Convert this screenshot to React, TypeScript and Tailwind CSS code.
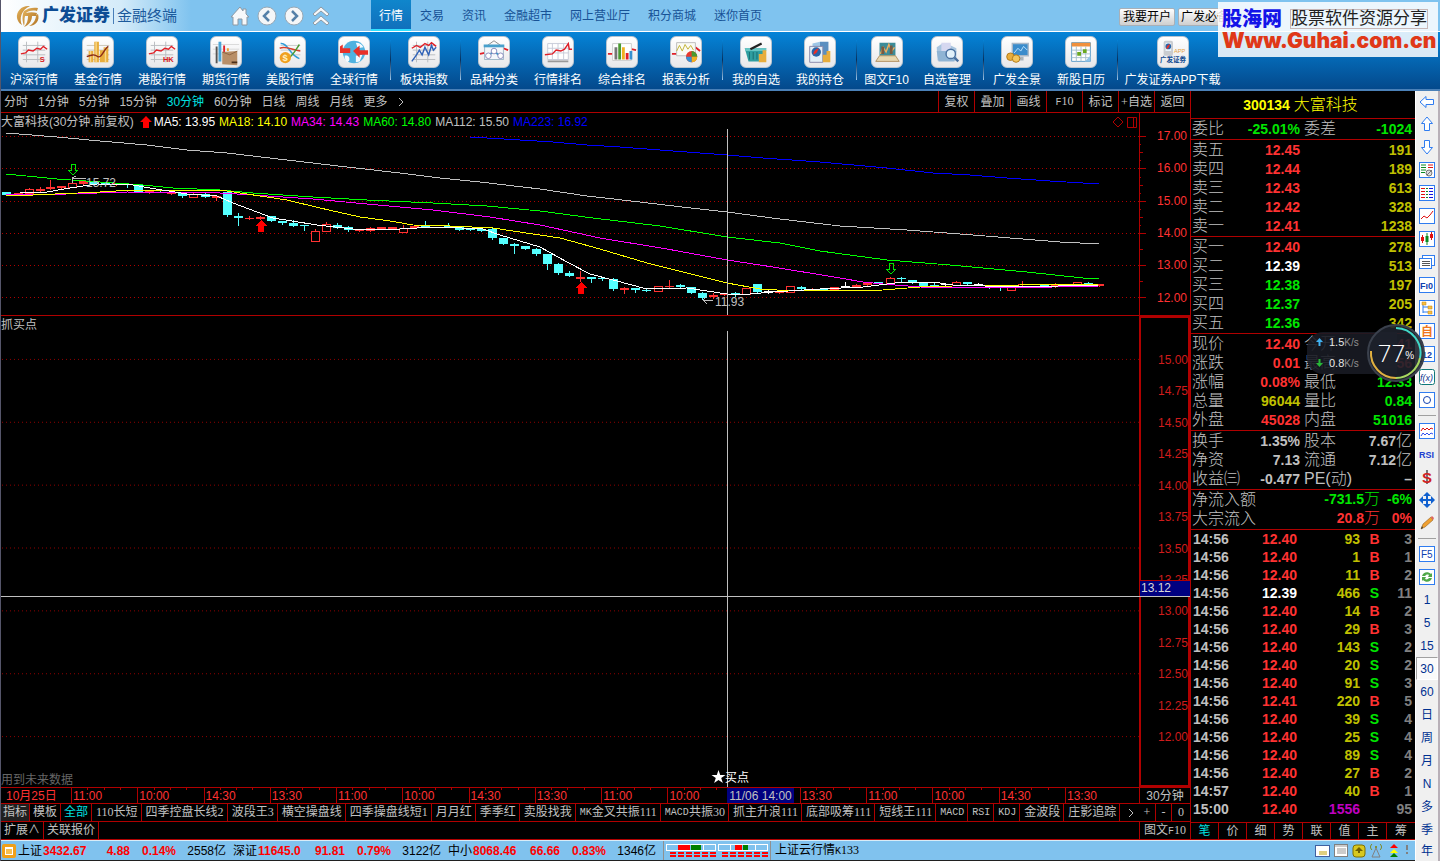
import React from 'react';

type Row = [string, string, string, string, string, string];

const mainNav = ['交易', '资讯', '金融超市', '网上营业厅', '积分商城', '迷你首页'];

const toolGroups = [
  [
    { icon: 'lineS', label: '沪深行情' },
    { icon: 'gold', label: '基金行情' },
    { icon: 'lineHK', label: '港股行情' },
    { icon: 'futures', label: '期货行情' },
    { icon: 'us', label: '美股行情' },
    { icon: 'globe', label: '全球行情' },
  ],
  [{ icon: 'index', label: '板块指数' }],
  [
    { icon: 'types', label: '品种分类' },
    { icon: 'rank', label: '行情排名' },
    { icon: 'bars', label: '综合排名' },
    { icon: 'pie', label: '报表分析' },
  ],
  [
    { icon: 'basket', label: '我的自选' },
    { icon: 'holding', label: '我的持仓' },
  ],
  [
    { icon: 'f10', label: '图文F10', width: 'w-[57px]' },
    { icon: 'manage', label: '自选管理' },
  ],
  [
    { icon: 'monitor', label: '广发全景' },
    { icon: 'calendar', label: '新股日历' },
  ],
  [{ icon: 'app', label: '广发证券APP下载', width: 'w-[107px]' }],
];

const periods = ['分时', '1分钟', '5分钟', '15分钟', '30分钟', '60分钟', '日线', '周线', '月线', '更多'];
const chartTools = ['复权', '叠加', '画线', 'F10', '标记', '+自选', '返回'];

const legend = [
  { text: 'MA5: 13.95', color: 'text-white' },
  { text: 'MA18: 14.10', color: 'text-[#ffff00]' },
  { text: 'MA34: 14.43', color: 'text-[#ff00ff]' },
  { text: 'MA60: 14.80', color: 'text-[#00ff00]' },
  { text: 'MA112: 15.50', color: 'text-[#c0c0c0]' },
  { text: 'MA223: 16.92', color: 'text-[#0000ff]' },
];

const priceAxis = ['17.00', '16.00', '15.00', '14.00', '13.00', '12.00'];
const signalAxis = ['15.00', '14.75', '14.50', '14.25', '14.00', '13.75', '13.50', '13.25', '13.00', '12.75', '12.50', '12.25', '12.00'];
const timeAxis = ['11:00', '10:00', '14:30', '13:30', '11:00', '10:00', '14:30', '13:30', '11:00', '10:00', '', '13:30', '11:00', '10:00', '14:30'];

const maLines = [
  { color: '#0000ff', points: '470,137 487,138 520,140 553,142 587,145 620,147 673,151 727,155 763,158 820,162 887,168 933,173 970,175 1007,178 1050,181 1099,184' },
  { color: '#c0c0c0', points: '6,133 57,137 100,141 147,145 187,150 227,153 287,160 347,167 400,173 440,178 480,182 540,189 587,196 640,202 682,207 727,212 780,219 840,226 907,230 973,235 1060,242 1099,244' },
  { color: '#00ff00', points: '6,174 57,179 143,185 173,188 220,190 253,193 313,197 367,200 433,203 487,206 540,211 593,218 660,226 727,237 780,243 820,251 887,260 950,265 1027,272 1083,278 1099,279' },
  { color: '#ff00ff', points: '6,195 67,194 127,192 220,193 253,195 313,199 367,204 433,210 490,217 540,225 600,238 667,249 727,260 773,267 840,278 863,282 883,284 920,287 993,288 1053,287 1099,286' },
  { color: '#ffff00', points: '6,195 33,195 100,192 133,190 218,190 227,191 260,196 287,200 320,208 360,217 390,221 413,225 450,226 493,228 533,234 560,238 600,249 647,263 707,278 727,283 760,289 793,291 883,290 920,287 953,286 1020,285 1099,284' },
  { color: '#ffffff', points: '20,193 47,192 70,188 97,184 133,185 150,188 187,194 217,196 233,203 273,218 317,225 353,229 400,229 417,228 440,227 483,229 500,235 540,247 567,262 590,274 613,280 647,289 687,288 707,291 727,294 750,294 773,292 820,289 863,287 903,282 933,282 953,285 1017,287 1099,285' },
];

// x, body top, body bottom, high, low, kind (c = down, r = up filled, h = up hollow, w = flat)
const candles: [number, number, number, number, number, string][] = [
  [6, 192, 195, 192, 195, 'c'], [18, 193, 194, 193, 194, 'r'], [29, 189, 193, 188, 193, 'h'], [40, 189, 191, 187, 191, 'r'],
  [50, 187, 189, 180, 189, 'r'], [61, 186, 188, 186, 188, 'r'], [72, 183, 187, 181, 187, 'h'], [83, 181, 184, 181, 184, 'r'],
  [94, 182, 184, 182, 184, 'c'], [105, 183, 185, 183, 185, 'c'], [116, 183, 185, 183, 185, 'r'], [127, 184, 185, 184, 187, 'c'],
  [138, 185, 192, 185, 192, 'c'], [149, 191, 193, 191, 193, 'r'], [160, 190, 191, 189, 192, 'c'], [171, 193, 194, 193, 194, 'r'],
  [182, 193, 196, 193, 197, 'c'], [193, 194, 197, 193, 197, 'h'], [205, 194, 197, 193, 197, 'c'], [216, 196, 198, 196, 200, 'r'],
  [227, 192, 215, 191, 216, 'c'], [238, 216, 218, 213, 225, 'c'], [249, 218, 219, 216, 219, 'r'], [260, 217, 219, 216, 219, 'r'],
  [271, 216, 221, 216, 221, 'c'], [282, 221, 223, 221, 224, 'c'], [293, 223, 226, 220, 226, 'c'], [304, 225, 226, 225, 230, 'c'],
  [315, 231, 241, 229, 241, 'h'], [326, 224, 231, 222, 231, 'h'], [337, 225, 228, 223, 228, 'c'], [348, 227, 230, 226, 231, 'c'],
  [359, 230, 231, 230, 231, 'r'], [370, 228, 231, 227, 231, 'r'], [381, 227, 229, 227, 229, 'r'], [392, 227, 229, 227, 229, 'r'],
  [403, 228, 232, 225, 232, 'h'], [414, 226, 228, 225, 228, 'r'], [425, 226, 227, 221, 227, 'c'], [448, 226, 227, 223, 227, 'c'],
  [459, 227, 230, 226, 230, 'c'], [470, 228, 230, 228, 230, 'c'], [481, 229, 231, 229, 231, 'c'], [492, 229, 238, 228, 239, 'c'],
  [503, 238, 244, 238, 244, 'c'], [514, 244, 246, 243, 253, 'c'], [525, 246, 249, 246, 249, 'c'], [536, 249, 254, 248, 255, 'c'],
  [547, 254, 264, 254, 269, 'c'], [558, 264, 273, 263, 274, 'c'], [569, 273, 276, 271, 276, 'c'], [580, 277, 279, 271, 281, 'r'],
  [591, 277, 279, 277, 282, 'c'], [602, 278, 279, 278, 280, 'c'], [613, 279, 289, 278, 290, 'c'], [624, 288, 290, 287, 293, 'r'],
  [635, 288, 290, 288, 292, 'c'], [646, 290, 291, 289, 291, 'c'], [658, 286, 291, 286, 291, 'h'], [669, 286, 287, 280, 287, 'r'],
  [680, 285, 287, 284, 287, 'c'], [691, 287, 293, 287, 293, 'c'], [702, 293, 298, 292, 299, 'c'], [713, 295, 297, 293, 298, 'r'],
  [724, 294, 295, 293, 295, 'r'], [735, 293, 294, 292, 296, 'c'], [746, 288, 294, 288, 294, 'h'], [757, 284, 292, 284, 292, 'c'],
  [768, 291, 292, 290, 293, 'w'], [779, 292, 293, 292, 293, 'r'], [790, 286, 292, 286, 292, 'h'], [801, 287, 289, 286, 289, 'c'],
  [812, 289, 290, 288, 290, 'r'], [823, 289, 290, 288, 290, 'c'], [834, 287, 290, 287, 290, 'r'], [845, 286, 287, 282, 287, 'w'],
  [856, 285, 287, 284, 287, 'r'], [867, 283, 285, 282, 285, 'r'], [878, 282, 283, 282, 283, 'c'], [890, 278, 284, 277, 284, 'h'],
  [901, 278, 279, 277, 281, 'c'], [912, 280, 283, 280, 283, 'c'], [923, 283, 286, 283, 286, 'c'], [934, 285, 286, 283, 286, 'c'],
  [945, 284, 285, 283, 286, 'w'], [956, 282, 285, 281, 285, 'h'], [967, 282, 284, 282, 284, 'c'], [978, 284, 285, 283, 285, 'w'],
  [989, 286, 287, 286, 288, 'c'], [1000, 287, 288, 287, 290, 'c'], [1011, 287, 290, 287, 290, 'h'], [1022, 284, 285, 281, 285, 'r'],
  [1044, 285, 287, 285, 287, 'c'], [1055, 285, 287, 283, 287, 'r'], [1077, 282, 284, 282, 284, 'h'], [1088, 283, 284, 282, 284, 'c'],
  [1099, 284, 286, 284, 286, 'r'],
];

const indicators = [
  '110长短', '四季控盘长线2', '波段王3', '横空操盘线', '四季操盘线短1', '月月红', '季季红', '卖股找我', 'MK金叉共振111',
  'MACD共振30', '抓主升浪111', '底部吸筹111', '短线王111', 'MACD', 'RSI', 'KDJ', '金波段', '庄影追踪',
];

const R = 'text-[#ff3232]';
const G = 'text-[#00e600]';
const Y = 'text-[#c0c000]';
const W = 'text-white';
const S = 'text-[#c0c0c0]';

const quoteSections: Row[][] = [
  [['委比', '-25.01%', G, '委差', '-1024', G]],
  [
    ['卖五', '12.45', R, '', '191', Y],
    ['卖四', '12.44', R, '', '189', Y],
    ['卖三', '12.43', R, '', '613', Y],
    ['卖二', '12.42', R, '', '328', Y],
    ['卖一', '12.41', R, '', '1238', Y],
  ],
  [
    ['买一', '12.40', R, '', '278', Y],
    ['买二', '12.39', W, '', '513', Y],
    ['买三', '12.38', G, '', '197', Y],
    ['买四', '12.37', G, '', '205', Y],
    ['买五', '12.36', G, '', '342', Y],
  ],
  [
    ['现价', '12.40', R, '今开', '12.41', R],
    ['涨跌', '0.01', R, '最高', '12.56', R],
    ['涨幅', '0.08%', R, '最低', '12.33', G],
    ['总量', '96044', Y, '量比', '0.84', G],
    ['外盘', '45028', R, '内盘', '51016', G],
  ],
  [
    ['换手', '1.35%', S, '股本', '7.67亿', S],
    ['净资', '7.13', S, '流通', '7.12亿', S],
    ['收益㈢', '-0.477', S, 'PE(动)', '–', S],
  ],
];

const ticks = [
  ['14:56', '12.40', '93', 'B', '3'],
  ['14:56', '12.40', '1', 'B', '1'],
  ['14:56', '12.40', '11', 'B', '2'],
  ['14:56', '12.39', '466', 'S', '11'],
  ['14:56', '12.40', '14', 'B', '2'],
  ['14:56', '12.40', '29', 'B', '3'],
  ['14:56', '12.40', '143', 'S', '2'],
  ['14:56', '12.40', '20', 'S', '2'],
  ['14:56', '12.40', '91', 'S', '3'],
  ['14:56', '12.41', '220', 'B', '5'],
  ['14:56', '12.40', '39', 'S', '4'],
  ['14:56', '12.40', '25', 'S', '4'],
  ['14:56', '12.40', '89', 'S', '4'],
  ['14:56', '12.40', '27', 'B', '2'],
  ['14:57', '12.40', '40', 'B', '1'],
  ['15:00', '12.40', '1556', '', '95'],
];

const sideIcons = [
  ['left', 'up', 'down', 'report', 'list', 'trend', 'kline', 'pages', 'fio', 'tree', 'zi', 'n12', 'fx', 'ring'],
  ['waves', 'rsi', 'dollar', 'move', 'pencil'],
  ['f5', 'refresh'],
];
const sidePeriods = ['1', '5', '15', '30', '60', '日', '周', '月', 'N', '多', '季', '年'];

const markets = [
  { name: '上证', price: '3432.67', change: '4.88', pct: '0.14%', amount: '2558亿' },
  { name: '深证', price: '11645.0', change: '91.81', pct: '0.79%', amount: '3122亿' },
  { name: '中小', price: '8068.46', change: '66.66', pct: '0.83%', amount: '1346亿' },
];

// Capitals are set in a narrow mono face, the rest keeps the song-like digits
const Mixed = ({ text }: { text: string }) => (
  <>
    {text.split(/([A-Z]+)/).map((part, i) =>
      /[A-Z]/.test(part) ? (
        <span key={i} className="font-[family-name:'Liberation_Mono',monospace] text-[10px]">{part}</span>
      ) : (
        part
      )
    )}
  </>
);

const Amount = ({ text }: { text: string }) => (
  <>
    {text.split(/([亿万])/).map((part, i) =>
      /[亿万]/.test(part) ? <span key={i} className="text-base/[18px] font-light">{part}</span> : part
    )}
  </>
);

const Chevron = () => (
  <svg viewBox="0 0 6 10" className="h-[10px] w-[6px]" fill="none" stroke="currentColor" aria-hidden="true"><path d="M1 1l4 4-4 4" /></svg>
);

const Grid = () => <path d="M4 9h24M4 14h24M4 19h24M4 24h24M8 5v22M20 5v22" stroke="#b9bcc0" strokeWidth="1" fill="none" />;
const RedLine = () => <path d="M2 18l5-1 3-3 5 1 4-3 4 1 3-3 4 3" stroke="#e02028" strokeWidth="1.5" fill="none" />;

const toolArt: Record<string, React.ReactNode> = {
  lineS: <><Grid /><RedLine /><text x="22" y="27" fontSize="8" fontWeight="bold" fill="#d81820">S</text></>,
  lineHK: <><Grid /><RedLine /><text x="17" y="27" fontSize="8" fontWeight="bold" fill="#d81820">HK</text></>,
  gold: (
    <>
      <path d="M4 9h24M4 14h24M4 19h24M4 24h24" stroke="#c9c2b4" />
      <path d="M6 15h5v12H6zM12 5h5v22h-5zM18 14h4v13h-4zM22 11h5v16h-5z" fill="#e8ad3c" />
      <path d="M8 15v12M14 5v22M24 11v16" stroke="#f8d98a" strokeWidth="1.5" />
      <path d="M4 21c5-2 8-3 12 0 4 2 6-8 11-11" stroke="#8c2c18" strokeWidth="1.5" fill="none" />
    </>
  ),
  futures: (
    <>
      <path d="M2 8h28M2 13h28M2 18h12" stroke="#d9d9d9" />
      <path d="M5 10h2v18H5z" fill="#555" /><path d="M8 5h3v21H8z" fill="#4aa5d8" />
      <path d="M13 9h2v7h-2z" fill="#e02028" /><path d="M17 12h2v3h-2z" fill="#f0a030" />
      <path d="M12 16l16-1v15l-16-1z" fill="#b98f68" /><path d="M12 16l8 3 8-4" stroke="#8c6340" fill="none" /><path d="M22 27h6" stroke="#4b2f18" strokeWidth="2" />
    </>
  ),
  us: (
    <>
      <path d="M6 9h21M6 14h21M6 19h21" stroke="#c8c8c8" />
      <path d="M6 7c8-1 9 12 20 16" stroke="#2f9cd8" strokeWidth="1.5" fill="none" />
      <path d="M5 12c7-3 13 2 22 3" stroke="#d8402c" strokeWidth="1.5" fill="none" />
      <path d="M14 23c5-3 8-9 12-15" stroke="#4a9a30" strokeWidth="1.5" fill="none" />
      <circle cx="11" cy="22" r="6" fill="#f0a020" /><text x="8" y="26" fontSize="10" fontWeight="bold" fill="#fff2c0">$</text>
    </>
  ),
  globe: (
    <>
      <circle cx="16" cy="16" r="12" fill="#4fb2e0" />
      <path d="M6 20c3-1 6 1 5 5l-2 2c-2-2-3-4-3-7zM18 6c4 0 7 2 8 5l-6 1zM18 20l7-1-3 7-4 1z" fill="#f4faff" />
      <path d="M1 10l3-2v4h8v5H1zM31 21v-7h-9V9l-7 6 7 7v-3h9z" fill="#e83028" />
    </>
  ),
  index: (
    <>
      <Grid />
      <path d="M3 12l5-3 4 2 5-4 4 2 3-3 5 4" stroke="#e02028" strokeWidth="1.5" fill="none" />
      <path d="M3 26l5-7 3-5 3 5 3-8 4 8 3-10 2 5 3-3" stroke="#2f62b8" strokeWidth="1.5" fill="none" />
    </>
  ),
  types: (
    <>
      <path d="M1 18l5-1M26 12l5 2" stroke="#e02028" strokeWidth="2" />
      <path d="M16 4L9 9M16 4l7 5" stroke="#888" /><rect x="6" y="9" width="20" height="15" fill="#f4f8fb" stroke="#9db6c6" /><rect x="5" y="8" width="22" height="3" fill="#48a0cc" />
      <path d="M10 20l6-5 6 5" stroke="#4098c8" strokeWidth="2" fill="none" /><circle cx="10" cy="20" r="3" fill="#fff" stroke="#88b" /><circle cx="16" cy="15" r="3" fill="#fff" stroke="#88b" /><circle cx="23" cy="20" r="3" fill="#fff" stroke="#88b" />
    </>
  ),
  rank: (
    <>
      <path d="M5 7h22v17H5zM5 12h22M5 17h22M10 7v17M16 7v17M22 7v17" stroke="#c6cbd8" fill="#fff" /><path d="M5 26h22" stroke="#999" strokeWidth="2" />
      <path d="M2 19l8-1 4-4 5 1 4-2 4-6 1 6h3" stroke="#e02028" strokeWidth="1.5" fill="none" />
    </>
  ),
  bars: (
    <>
      <path d="M1 18h5M26 13l5 1" stroke="#e02028" strokeWidth="2" /><path d="M6 7h20v18H6z" fill="#fff" stroke="#ccc" />
      <path d="M8 11h3v13H8z" fill="#777" /><path d="M12 7h3v17h-3z" fill="#4a9a30" /><path d="M16 11h3v13h-3z" fill="#f0b020" /><path d="M20 17h3v7h-3z" fill="#e02028" /><path d="M24 15h3v9h-3z" fill="#3890d0" />
    </>
  ),
  pie: (
    <>
      <path d="M1 18h5M26 11l5 4" stroke="#e02028" strokeWidth="2" /><path d="M6 6h20v14H6z" fill="#fbfbf4" stroke="#bbb" />
      <path d="M6 15l3-6 3 6 3-7 3 5 3-4 3 5" stroke="#c0b030" fill="none" />
      <circle cx="22" cy="21" r="6" fill="#e8382c" /><path d="M22 21V15a6 6 0 0 1 6 6z" fill="#4a9a30" /><path d="M22 21h6a6 6 0 0 1-6 6z" fill="#f0b020" /><path d="M22 21v6a6 6 0 0 1-6-6z" fill="#3890d0" />
    </>
  ),
  basket: (
    <>
      <path d="M4 12h23l-3 14H8z" fill="#2f9ea0" /><path d="M4 12h23v3H5z" fill="#68c6c4" /><path d="M9 16v8M13 16v8M17 16v8" stroke="#176c70" />
      <path d="M10 13l12-6" stroke="#222" strokeWidth="2.5" /><path d="M19 18h4v9h-4zM23 14h4v13h-4z" fill="#e8ad3c" />
    </>
  ),
  holding: (
    <>
      <path d="M8 7l8-2v20l-8 2z" fill="#9ec6e6" /><path d="M16 5h9v20h-9z" fill="#5a8fc0" /><path d="M5 10h14v17H5z" fill="#e4f0f8" stroke="#88a" />
      <circle cx="12" cy="16" r="5" fill="#2864a8" /><path d="M9 19c0-5 3-6 6-7-2 2-1 5-6 7z" fill="#e83028" /><path d="M19 19h4v8h-4zM23 15h4v12h-4z" fill="#e8ad3c" />
    </>
  ),
  f10: (
    <>
      <path d="M8 6h17v14H8z" fill="#3c8c98" /><path d="M9 18l3-7 3 5 3-8 3 7 3-4" stroke="#f0b060" strokeWidth="1.5" fill="none" /><path d="M10 10h3v8h-3zM19 9h3v9h-3z" fill="#7a5a40" />
      <path d="M8 20h17l4 6H4z" fill="#e8d8b0" stroke="#b09060" />
    </>
  ),
  manage: (
    <>
      <path d="M5 11l6-4 9 2 6 3v13H6z" fill="#a8c4de" /><path d="M10 6h10v10H10z" fill="#d6d8f0" /><path d="M5 15h21l-2 11H7z" fill="#8fb4d4" />
      <circle cx="20" cy="18" r="5" fill="#e0f0fa" stroke="#4870a0" strokeWidth="1.5" /><path d="M24 22l4 4" stroke="#4870a0" strokeWidth="2.5" />
    </>
  ),
  monitor: (
    <>
      <path d="M11 7h17v13H11z" fill="#3a8ccc" stroke="#a8b8c8" strokeWidth="1.5" /><path d="M13 17l4-5 3 3 3-5 4 4" stroke="#bfe4ff" fill="none" /><path d="M17 21h6v4h-6z" fill="#aab4bc" />
      <circle cx="9" cy="21" r="4" fill="#e8ad3c" stroke="#b07818" /><circle cx="15" cy="23" r="4" fill="#f4c65c" stroke="#b07818" />
    </>
  ),
  calendar: (
    <>
      <path d="M6 6h20v20H6z" fill="#fff" stroke="#5a9ac8" /><path d="M6 6h20v4H6z" fill="#f0903c" /><path d="M6 14h20M6 18h20M6 22h20M11 10v16M16 10v16M21 10v16" stroke="#a8c0cc" />
      <path d="M12 16h4v4h-4zM18 13h4v4h-4z" fill="#6aa820" /><path d="M20 26l6-6v6z" fill="#90c4e8" />
    </>
  ),
  app: (
    <>
      <rect x="6" y="4" width="10" height="16" rx="2" fill="#c9ccd0" /><path d="M8 6h6v9H8z" fill="#e8f2fa" /><circle cx="11" cy="10" r="3" fill="#2864a8" /><path d="M9 13c0-4 2-4 4-6-1 3-1 5-4 6z" fill="#e83028" />
      <text x="17" y="17" fontSize="6" fill="#e0a040">APP</text><text x="2" y="27" fontSize="7" fontWeight="bold" fill="#104a90">广发证券</text>
    </>
  ),
};

const Frame = ({ children }: { children?: React.ReactNode }) => (
  <><rect x="0.5" y="0.5" width="15" height="15" fill="#fff" stroke="#2f7cf0" />{children}</>
);

const sideArt: Record<string, React.ReactNode> = {
  left: <path d="M1 8l6-5.500V5.500h7.500v5H7v3z" fill="#fff" stroke="#2f7cf0" />,
  up: <path d="M8 1l5.500 6.500h-3v7h-5v-7h-3z" fill="#fff" stroke="#2f7cf0" />,
  down: <path d="M8 15l5.500-6.500h-3v-7h-5v7h-3z" fill="#fff" stroke="#2f7cf0" />,
  report: <Frame><path d="M2 3h5M2 5.500h5M2 8h5M2 10.500h4" stroke="#0a8a20" /><path d="M9 3h5M9 5.500h5" stroke="#e01010" /><circle cx="10" cy="11" r="3" fill="#ddd" stroke="#777" /><path d="M8 13l5-5" stroke="#777" /></Frame>,
  list: <Frame><path d="M2 3.500h4M2 6.500h4M2 9.500h4M2 12.500h4" stroke="#e01010" /><path d="M7 3.500h2M7 6.500h2M7 9.500h2M7 12.500h2" stroke="#0a8a20" /><path d="M10 3.500h4M10 6.500h4M10 9.500h4M10 12.500h4" stroke="#1010e0" /></Frame>,
  trend: <Frame><path d="M2 11l3-3 3 2 3-3 3-4" stroke="#e01010" fill="none" /></Frame>,
  kline: <Frame><path d="M3.500 4v8M12.500 1v8" stroke="#e01010" /><path d="M2 6h3v4H2zM11 3h3v4h-3z" fill="#e01010" /><path d="M8 2v12" stroke="#0a8a20" /><path d="M6.500 5h3v6h-3z" fill="#0a8a20" /></Frame>,
  pages: <><rect x="3.500" y="1.500" width="12" height="10" fill="#fff" stroke="#2f7cf0" /><rect x="0.500" y="4.500" width="12" height="10" fill="#fff" stroke="#2f7cf0" /><path d="M3 7.500h8M3 9.500h8M3 11.500h8" stroke="#555" /></>,
  fio: <Frame><text x="1" y="12" fontSize="9" fontWeight="bold" fill="#1040b0">Fı0</text></Frame>,
  tree: <Frame><path d="M4 3v10M4 7h5M4 12h5" stroke="#2f7cf0" /><path d="M3 2h4v3H3zM9 6h4v3H9zM9 11h4v3H9z" fill="#f8c040" stroke="#c08010" strokeWidth="0.500" /></Frame>,
  zi: <Frame><text x="2" y="13" fontSize="12" fontWeight="bold" fill="#f07820">自</text></Frame>,
  n12: <Frame><text x="3" y="12" fontSize="9" fontWeight="bold" fill="#1040b0">12</text></Frame>,
  fx: <><rect x="0.500" y="0.500" width="15" height="15" rx="2" fill="#fff" stroke="#107878" /><text x="1" y="12" fontSize="9" fontStyle="italic" fill="#103890">f(x)</text></>,
  ring: <Frame><circle cx="8" cy="8" r="3.500" fill="none" stroke="#1040b0" /></Frame>,
  waves: <Frame><path d="M2 8l2-3 2 2 2-2 2 2 2-2 2 1" stroke="#e01010" fill="none" /><path d="M2 13l2-3 2 2 2-2 2 2 2-2 2 1" stroke="#2f50f0" fill="none" /></Frame>,
  rsi: <text x="0" y="12" fontSize="9" fontWeight="bold" fill="#2040d0">RSI</text>,
  dollar: <><path d="M8 1v14" stroke="#777" strokeWidth="2" /><text x="3" y="14" fontSize="15" fontWeight="bold" fill="#d02020">S</text></>,
  move: <path d="M8 0l4 4H9v3h3V4l4 4-4 4V9H9v3h3l-4 4-4-4h3V9H4v3L0 8l4-4v3h3V4H4z" fill="#1060d0" />,
  pencil: <><path d="M2 14l2-5 8-7 2 3-8 7z" fill="#f0a030" stroke="#805010" strokeWidth="0.500" /><path d="M12 2l2 3 1-2-2-2z" fill="#e06060" /><path d="M2 14l1-3 1 2z" fill="#333" /></>,
  f5: <Frame><text x="2" y="12" fontSize="10" fill="#1040b0">F5</text></Frame>,
  refresh: <Frame><path d="M3 7c1-4 6-5 9-2l1-1v4H9l1-2c-2-1-3 0-4 1zM13 9c-1 4-6 5-9 2l-1 1V8h4l-1 2c2 1 3 0 4-1z" fill="#50a848" /></Frame>,
};

const Header = () => (
  <header className="relative">
    <div className="flex h-8 items-center border-b border-white bg-[linear-gradient(90deg,#fff_0,#d4ebf9_120px,#7fc3ef_190px)] text-xs">
      <div className="flex w-[229px] items-center pl-[15px]">
        <svg viewBox="0 0 24 24" className="size-6" aria-hidden="true">
          <defs>
            <linearGradient id="gold" x1="0" x2="1" y2="1">
              <stop offset="0" stopColor="#e8b860" /><stop offset="1" stopColor="#a8691c" />
            </linearGradient>
          </defs>
          <path d="M14 2C6 1 0 7 1 14c1 5 5 7 5 7-3-6-1-15 8-19z" fill="url(#gold)" />
          <path d="M8 7c4-3 9-4 14-3l-1 3c-5-1-9 0-11 2 4-1 7-1 11 0l-1 3h-4c0 5-3 9-8 11 3-3 4-7 4-11H9c-1 3 0 7-1 10-2-5-2-11 0-15z" fill="url(#gold)" />
          <path d="M22 10c2 6-2 12-9 12 4-2 7-6 7-11z" fill="url(#gold)" />
        </svg>
        <span className="ml-[2px] text-[17px]/[20px] font-black text-[#0c4c94]">广发证券</span>
        <span className="mx-[3px] h-4 w-px bg-[#4a7fb8]" />
        <span className="text-[15px]/[20px] text-[#1c5a9c]">金融终端</span>
      </div>
      <div className="flex w-[141px] items-center gap-[7px]">
        <button aria-label="首页"><svg viewBox="0 0 20 20" className="size-5"><path d="M10 1L1 11h2v8h5v-6h4v6h5v-8h2l-3-3V3h-3v2z" fill="#f6f8fa" stroke="#8d99a4" /></svg></button>
        <button aria-label="后退"><svg viewBox="0 0 20 20" className="size-5"><circle cx="10" cy="10" r="9" fill="#f4f6f8" stroke="#9aa8b4" /><path d="M12 5l-5 5 5 5" fill="none" stroke="#5580a8" strokeWidth="2.500" /></svg></button>
        <button aria-label="前进"><svg viewBox="0 0 20 20" className="size-5"><circle cx="10" cy="10" r="9" fill="#f4f6f8" stroke="#9aa8b4" /><path d="M8 5l5 5-5 5" fill="none" stroke="#5580a8" strokeWidth="2.500" /></svg></button>
        <button aria-label="收起"><svg viewBox="0 0 20 20" className="size-5"><path d="M10 1l8 7-2 2-6-5-6 5-2-2zM10 10l8 7-2 2-6-5-6 5-2-2z" fill="#f6f8fa" stroke="#8d99a4" /></svg></button>
      </div>
      <nav className="flex h-full items-center">
        <button className="h-full border-b-2 border-[#30e0ff] bg-linear-to-b from-[#0f86cc] to-[#1170bc] px-2 pt-[3px] text-white">行情</button>
        {mainNav.map((item) => (
          <button key={item} className="px-[9px] pt-px text-[#175296]">{item}</button>
        ))}
      </nav>
      <div className="mr-[208px] ml-auto flex gap-[3px] pt-[2px] text-black">
        <button className="rounded-xs border border-[#a8b0b8] bg-linear-to-b from-white to-[#cfcfcf] px-[3px] leading-4">我要开户</button>
        <button className="rounded-xs border border-[#a8b0b8] bg-linear-to-b from-white to-[#cfcfcf] px-[2px] leading-4">广发必备</button>
      </div>
    </div>

    <div className="flex h-[59px] border-b-2 border-[#4a80b8] bg-linear-to-b from-[#0584d8] to-[#04498c] pl-px">
      {toolGroups.map((group, g) => (
        <React.Fragment key={g}>
          {g > 0 && <span className="mt-2 mr-px ml-1 h-10 w-px bg-linear-to-b from-[#0584d8] via-[#06305c] to-[#9cc8ec]" />}
          {group.map((tool) => (
            <button key={tool.label} className={`flex flex-col items-center pt-1 text-xs text-white ${'width' in tool ? tool.width : 'w-16'}`}>
              <svg viewBox="0 0 32 32" className="size-8 shrink-0 rounded-md border border-[#b8c4d0] bg-linear-to-b from-white to-[#e8e8ea]" aria-hidden="true">
                {toolArt[tool.icon]}
              </svg>
              <span className="mt-1 leading-4 whitespace-nowrap">{tool.label}</span>
            </button>
          ))}
        </React.Fragment>
      ))}
    </div>

    <div className="absolute top-[2px] right-[2px] h-[55px] w-[220px] bg-white/85 px-1">
      <div className="flex items-center gap-2 pt-[2px]">
        <span className="text-xl/[30px] font-black text-[#1414e8]">股海网</span>
        <span className="border border-[#c8b8b8] text-[17px]/[18px] text-[#222]">股票软件资源分享</span>
      </div>
      <div className="font-[family-name:Inter,sans-serif] text-[21px]/[14px] font-black text-[#e03818]">Www.Guhai.com.cn</div>
    </div>
  </header>
);

const PeriodBar = () => (
  <div className="flex h-[22px] shrink-0 items-center border-b border-[#b00000] text-xs text-[#c0c0c0]">
    <div className="flex gap-[10px] pl-[3px]">
      {periods.map((p) => (
        <button key={p} className={p === '30分钟' ? 'text-[#00e0e0]' : ''}>{p}</button>
      ))}
      <button aria-label="展开" className="flex items-center"><Chevron /></button>
    </div>
    <div className="ml-auto flex h-full">
      {chartTools.map((t) => (
        <button key={t} className="w-9 border-l border-[#b00000] text-center font-[family-name:'Liberation_Serif','Noto_Sans_CJK_SC',serif]"><Mixed text={t} /></button>
      ))}
    </div>
  </div>
);

const PriceChart = () => (
  <section className="flex h-[203px] shrink-0 border-b border-[#b00000]">
    <div className="relative min-w-0 flex-1">
      <svg viewBox="1 113 1138 202" preserveAspectRatio="none" className="absolute inset-0 size-full" shapeRendering="crispEdges">
        {[136, 168, 201, 233, 265, 297].map((y) => (
          <path key={y} d={`M2 ${y}.5H1139`} stroke="#b00000" strokeDasharray="1 3" />
        ))}
        {candles.map(([x, top, bottom, high, low, kind]) => {
          const color = kind === 'c' ? '#54ffff' : kind === 'w' ? '#ffffff' : '#ff3232';
          return (
            <g key={x}>
              <path d={`M${x}.5 ${high}V${kind === 'h' ? top : low + 1}`} stroke={color} />
              {kind === 'h' ? (
                <rect x={x - 3.5} y={top + 0.5} width="8" height={bottom - top} fill="#000" stroke={color} />
              ) : (
                <rect x={x - 4} y={top} width="9" height={bottom - top} fill={color} />
              )}
            </g>
          );
        })}
        {maLines.map((line) => (
          <polyline key={line.color} points={line.points} fill="none" stroke={line.color} />
        ))}
        <path d="M71 164h4v6h3l-5 5-5-5h3zM889 263h4v6h3l-5 5-5-5h3z" fill="none" stroke="#00e600" />
        <path d="M261 220l6 6h-3v6h-6v-6h-3zM581 282l6 6h-3v6h-6v-6h-3z" fill="#ff0000" />
        <path d="M72 178h14M72 178l4-2M72 178v5M703 300h10M703 300l4-4M703 300l4 4" fill="none" stroke="#c0c0c0" />
        <text x="86" y="187" fontSize="12" fill="#c0c0c0">15.72</text>
        <text x="715" y="306" fontSize="12" fill="#c0c0c0">11.93</text>
        <path d="M727.5 129V315" stroke="#c0c0c0" />
      </svg>
      <div className="relative flex items-center pr-[1px] text-xs/[18px] text-[#c0c0c0]">
        <span>大富科技(30分钟.前复权)</span>
        <svg viewBox="0 0 12 12" className="mr-[2px] ml-[6px] size-3 text-[#ff0000]" aria-hidden="true"><path d="M6 0l6 6H9v6H3V6H0z" fill="currentColor" /></svg>
        <div className="flex gap-1">
          {legend.map((item) => (
            <span key={item.text} className={item.color}>{item.text}</span>
          ))}
        </div>
        <svg viewBox="0 0 26 12" className="ml-auto h-3 w-[26px]" fill="none" stroke="#b00000" aria-hidden="true">
          <path d="M6 1l5 5-5 5-5-5zM15.500 1.500h9v10h-9zM21.500 1.500v10" />
        </svg>
      </div>
    </div>
    <div className="relative flex w-[51px] flex-col border-l border-[#b00000] pt-[7px] pb-px text-right text-xs text-[#ff3232]">
      <svg viewBox="0 0 6 202" className="absolute top-0 left-0 h-[202px] w-[6px]" stroke="#b00000" aria-hidden="true">
        <path d="M0 23.500h6M0 55.500h6M0 88.500h6M0 120.500h6M0 152.500h6M0 184.500h6M0 39.500h3M0 72.500h3M0 104.500h3M0 136.500h3M0 168.500h3M0 31.500h1M0 47.500h1M0 64.500h1M0 80.500h1M0 96.500h1M0 112.500h1" />
      </svg>
      {priceAxis.map((p) => (
        <span key={p} className="flex flex-1 items-center justify-end pr-[3px]">{p}</span>
      ))}
    </div>
  </section>
);

const SignalChart = () => (
  <section className="relative flex min-h-0 flex-1 border-b border-[#b00000]">
    <div className="relative flex min-w-0 flex-1 flex-col justify-between text-xs text-[#c0c0c0]">
      <svg viewBox="1 316 1138 472" preserveAspectRatio="none" className="absolute inset-0 size-full" shapeRendering="crispEdges">
        {[359, 422, 485, 548, 611, 674, 737].map((y) => (
          <path key={y} d={`M2 ${y}.5H1139`} stroke="#900000" strokeDasharray="1 3" />
        ))}
        <path d="M727.5 331V788" stroke="#c0c0c0" />
        <path d="M718.5 771l1.700 5h5.300l-4.300 3 1.700 5-4.400-3-4.400 3 1.700-5-4.300-3h5.300z" fill="#fff" shapeRendering="auto" />
        <text x="725" y="783" fontSize="12" fill="#fff">买点</text>
      </svg>
      <span className="relative leading-[18px]">抓买点</span>
      <span className="relative leading-[14px] text-[#666]">用到未来数据</span>
    </div>
    <div className="flex w-[51px] flex-col border-2 border-[#b00000] pt-[26px] pb-[32px] text-right text-xs text-[#d01c1c]">
      {signalAxis.map((p) => (
        <span key={p} className="flex flex-1 items-center justify-end">{p}</span>
      ))}
    </div>
    {/* crosshair */}
    <div className="pointer-events-none absolute inset-x-0 top-[280px] h-px bg-[#c0c0c0]" />
    <div className="absolute top-[264px] right-0 w-[50px] border-t border-[#b00000] bg-[#000080] pl-px text-xs/[15px] text-[#d8d8d8]">13.12</div>
  </section>
);

const SubTicks = () => (
  <span className="absolute inset-x-0 top-0 grid h-[2px] grid-cols-4 divide-x divide-[#b00000]">
    <i /><i /><i /><i />
  </span>
);

const TimeAxis = () => (
  <div className="relative flex h-4 shrink-0 border-b border-[#b00000] text-xs/[17px] text-[#ff3232]">
    <span className="w-[70px] pl-[5px]">10月25日</span>
    {timeAxis.map((t, i) => (
      <span key={i} className="relative flex-1 border-l border-[#b00000] pl-px"><SubTicks />{t}</span>
    ))}
    <span className="w-[74px] border-l border-[#b00000] pl-px">13:30</span>
    <span className="w-[51px] border-l border-[#b00000] text-center text-[#c0c0c0]">30分钟</span>
    <span className="absolute left-[726px] h-[15px] w-[67px] bg-[#000080] text-center whitespace-nowrap text-[#c0c0c0]">11/06 14:00</span>
  </div>
);

const IndicatorTabs = () => (
  <div className="shrink-0 font-[family-name:'Liberation_Serif','Noto_Sans_CJK_SC',serif] text-xs/[17px] text-[#c0c0c0]">
    <div className="flex h-[18px] overflow-hidden border-b border-[#b00000] whitespace-nowrap">
      <button className="border-r border-[#b00000] bg-[#202020] px-[2px]">指标</button>
      <button className="border-r border-[#b00000] px-[3px]">模板</button>
      <button className="border-r border-[#b00000] px-[3px] text-[#00e0e0]">全部</button>
      {indicators.map((name, i) => (
        <button key={i} className="flex items-center border-r border-[#b00000] pr-[3px] pl-1"><Mixed text={name} /></button>
      ))}
      <button aria-label="更多指标" className="ml-auto flex w-4 items-center justify-center"><Chevron /></button>
      <button className="w-4">+</button>
      <button className="w-4 border-l border-[#b00000]">-</button>
      <button className="w-[19px] border-l border-[#b00000]">0</button>
    </div>
    <div className="flex h-[18px] border-b border-[#b00000]">
      <button className="border-r border-[#b00000] px-[3px]">扩展∧</button>
      <button className="border-r border-[#b00000] px-[3px]">关联报价</button>
      <button className="ml-auto w-[51px] border-l border-[#b00000]"><Mixed text="图文F10" /></button>
    </div>
  </div>
);

const NetWidget = () => (
  <div className="absolute top-[234px] -right-[10px] flex h-[55px] w-[118px] items-center font-normal">
    <div className="flex h-[42px] w-[90px] flex-col justify-center rounded-l-2xl bg-[#181b24]/90 pl-[9px] text-[11px]/[21px] text-[#e8e8e8]">
      <span className="flex items-center gap-[6px]"><svg viewBox="0 0 7 8" className="h-2 w-[7px]"><path d="M3.500 0L7 4H4.500v4h-2V4H0z" fill="#40b0f0" /></svg><span>1.5<span className="text-[10px] text-[#909090]">K/s</span></span></span>
      <span className="flex items-center gap-[6px]"><svg viewBox="0 0 7 8" className="h-2 w-[7px]"><path d="M3.500 8L7 4H4.500V0h-2v4H0z" fill="#28b838" /></svg><span>0.8<span className="text-[10px] text-[#909090]">K/s</span></span></span>
    </div>
    <div className="absolute right-0 flex size-[58px] items-center justify-center rounded-full border-2 border-[#3a404c] bg-[#1d212b]/90 text-white">
      <svg viewBox="0 0 54 54" className="absolute inset-0 size-full" fill="none" strokeWidth="2">
        <path d="M27 2a25 25 0 0 1 24 30" stroke="#40d8c8" /><path d="M51 32A25 25 0 0 1 27 52" stroke="#a8d860" /><path d="M27 52A25 25 0 0 1 2 25" stroke="#e0b040" />
      </svg>
      <span className="font-[family-name:'Open_Sans',sans-serif] text-2xl/[26px] font-light">77</span><span className="mt-2 text-[10px]">%</span>
    </div>
  </div>
);

const QuotePanel = () => (
  <aside className="relative flex w-[225px] shrink-0 flex-col border-l border-[#b00000] text-sm font-bold">
    <h1 className="h-7 border-b border-[#b00000] pr-[5px] text-center text-sm/[28px] font-bold text-[#ffff00]">
      300134 <span className="text-base/[26px] font-light">大富科技</span>
    </h1>
    {quoteSections.map((rows, s) => (
      <div key={s} className="border-b border-[#b00000] pb-px">
        <table className="w-full table-fixed border-collapse">
          <colgroup><col className="w-[52px]" /><col className="w-[57px]" /><col className="w-[50px]" /><col /></colgroup>
          <tbody>
            {rows.map(([label, value, color, label2, value2, color2]) => (
              <tr key={label} className="h-[19px]">
                <th scope="row" className="p-0 pl-px text-left text-base/[18px] font-light whitespace-nowrap text-[#c0c0c0]">{label}</th>
                <td className={`p-0 text-right leading-[18px] ${color}`}>{value}</td>
                <td className="p-0 pl-1 text-base/[18px] font-light whitespace-nowrap text-[#c0c0c0]">{label2}</td>
                <td className={`p-0 pr-[3px] text-right leading-[18px] ${color2}`}><Amount text={value2} /></td>
              </tr>
            ))}
          </tbody>
        </table>
      </div>
    ))}
    <div className="border-b border-[#b00000] pb-px leading-[19px]">
      <div className="flex pr-[3px] pl-px text-[#00e600]"><span className="text-base/[19px] font-light text-[#c0c0c0]">净流入额</span><span className="ml-auto"><Amount text="-731.5万" /></span><span className="w-8 text-right">-6%</span></div>
      <div className="flex pr-[3px] pl-px text-[#ff3232]"><span className="text-base/[19px] font-light text-[#c0c0c0]">大宗流入</span><span className="ml-auto"><Amount text="20.8万" /></span><span className="w-8 text-right">0%</span></div>
    </div>
    <table className="w-full table-fixed border-collapse leading-[18px]">
      <colgroup><col className="w-[46px]" /><col className="w-[60px]" /><col className="w-[63px]" /><col className="w-[29px]" /><col /></colgroup>
      <tbody>
        {ticks.map(([time, price, volume, side, count], i) => (
          <tr key={i} className="h-[18px]">
            <td className="p-0 pl-[2px] text-[#c0c0c0]">{time}</td>
            <td className={`p-0 text-right ${price === '12.39' ? 'text-white' : 'text-[#ff3232]'}`}>{price}</td>
            <td className={`p-0 text-right ${side ? 'text-[#c0c000]' : 'text-[#c000c0]'}`}>{volume}</td>
            <td className={`p-0 text-center ${side === 'B' ? 'text-[#ff3232]' : 'text-[#00e600]'}`}>{side}</td>
            <td className="p-0 pr-[3px] text-right text-[#808080]">{count}</td>
          </tr>
        ))}
      </tbody>
    </table>
    <div className="mt-auto grid h-[18px] grid-cols-8 divide-x divide-[#b00000] border-y border-[#b00000] text-xs/[16px] font-normal text-[#c0c0c0]">
      {['笔', '价', '细', '势', '联', '值', '主', '筹'].map((t, i) => (
        <button key={t} className={i === 0 ? 'text-[#00e0e0]' : ''}>{t}</button>
      ))}
    </div>
    <NetWidget />
  </aside>
);

const SideBar = () => (
  <aside className="flex w-[25px] shrink-0 flex-col border-r-2 border-l border-r-[#b8b0b8] border-l-white bg-[#f0f0f0] text-xs text-[#003090]">
    {sideIcons.map((icons, g) => (
      <React.Fragment key={g}>
        {g > 0 && <span className="flex h-2 items-center px-[2px]"><span className="h-px w-full bg-[#a0a0a0]" /></span>}
        {icons.map((name) => (
          <button key={name} aria-label={name} className="flex h-[23px] items-center justify-center first:h-[21px]">
            <svg viewBox="0 0 16 16" className="size-4">{sideArt[name]}</svg>
          </button>
        ))}
      </React.Fragment>
    ))}
    {sidePeriods.map((p) => (
      <button key={p} className={`h-[23px] last:h-5 ${p === '30' ? 'border border-[#a0a0a0] border-r-white border-b-white bg-[#fafafa]' : ''}`}>{p}</button>
    ))}
  </aside>
);

const Meter = ({ red, green }: { red: string; green: string }) => (
  <svg viewBox="0 0 50 14" className="h-[14px] w-[50px]" shapeRendering="crispEdges" aria-hidden="true">
    <path d="M0.500 0.500h49v6h-49zM12.500 0v7M37.500 0v7" fill="none" stroke="#fff" />
    <path d={red} fill="#ff0000" /><path d={green} fill="#008000" />
    <path d="M4 9h46M4 12h46" stroke="#ff0000" strokeWidth="2" strokeDasharray="6 2" />
  </svg>
);

const StatusBar = () => (
  <footer className="flex h-[21px] shrink-0 items-center border-t border-b border-t-[#d8ecf8] border-b-[#202020] bg-[#80c2ee] text-xs/[18px] text-black">
    <svg viewBox="0 0 14 14" className="mr-[2px] ml-px size-[14px]" aria-hidden="true"><rect width="14" height="14" rx="2" fill="#f0a018" /><rect x="3" y="3" width="8" height="8" fill="#fff" /><rect x="4" y="5" width="6" height="5" fill="#f8c050" /></svg>
    {markets.map((m) => (
      <span key={m.name} className="flex w-[215px] whitespace-nowrap">
        <span className="w-[25px]">{m.name}</span>
        <span className="w-[45px] font-bold text-[#ff0000]">{m.price}</span>
        <span className="w-[42px] text-right font-bold text-[#ff0000]">{m.change}</span>
        <span className="w-[46px] text-right font-bold text-[#ff0000]">{m.pct}</span>
        <span className="w-[50px] text-right">{m.amount}</span>
      </span>
    ))}
    <span className="flex h-full items-center gap-[2px] border-x border-[#909090] px-[2px]">
      <Meter red="M12 1h12v5H12z" green="M25 1h10v5H25z" />
      <Meter red="M17 1h7v5h-7z" green="M25 1h5v5h-5z" />
    </span>
    <span className="pl-1 font-[family-name:'Liberation_Serif','Noto_Sans_CJK_SC',serif]">上证云行情<Mixed text="K133" /></span>
    <svg viewBox="0 0 96 16" className="mr-1 ml-auto h-4 w-24" aria-hidden="true">
      <rect x="0.500" y="2.500" width="14" height="11" fill="#fff" stroke="#4060a0" /><path d="M4 9h8M4 11h8" stroke="#c0a000" />
      <rect x="19.500" y="1.500" width="13" height="12" fill="#fff" stroke="#808080" /><path d="M20 3h12M22 6h9M22 8h9M22 10h9" stroke="#999" />
      <rect x="38" y="2" width="12" height="12" rx="3" fill="#d8c820" stroke="#807000" /><path d="M44 4l4 4h-3v2h-2V8h-3z" fill="#706000" />
      <path d="M61 5l-4 9h8z" fill="none" stroke="#808080" /><path d="M57 1c-2 2-2 4 0 6M65 1c2 2 2 4 0 6" fill="none" stroke="#808000" /><circle cx="61" cy="4" r="1" fill="#808000" />
      <path d="M79 1l4 4h-8z" fill="#f00" /><path d="M79 6l4 4h-8z" fill="#ff0" /><path d="M79 10l4 4h-8z" fill="#008000" /><path d="M92 2v5M92 9v2" stroke="#808080" strokeWidth="2" />
    </svg>
  </footer>
);

const App: React.FC = () => {
  return (
    <div className="flex min-h-screen flex-col border-l border-[#55556a] bg-black font-[family-name:'Liberation_Sans','Noto_Sans_CJK_SC',sans-serif]">
      <Header />
      <div className="flex flex-1">
        <div className="flex min-w-0 flex-1 flex-col">
          <div className="flex flex-1">
            <main className="flex min-w-0 flex-1 flex-col">
              <PeriodBar />
              <PriceChart />
              <SignalChart />
              <TimeAxis />
              <IndicatorTabs />
            </main>
            <QuotePanel />
          </div>
          <StatusBar />
        </div>
        <SideBar />
      </div>
    </div>
  );
};

export default App;
